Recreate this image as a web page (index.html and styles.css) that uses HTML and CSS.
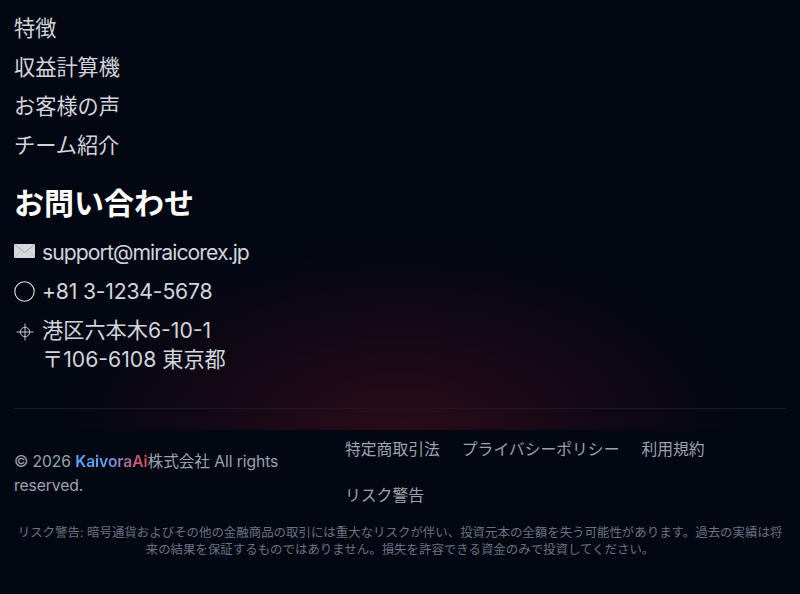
FILE: index.html
```html
<!DOCTYPE html>
<html lang="ja">
<head>
<meta charset="UTF-8">
<meta name="viewport" content="width=device-width, initial-scale=1.0">
<title>Footer</title>
<link rel="stylesheet" href="styles.css">
</head>
<body>
<footer class="footer">
<div class="footer-top">
<ul class="footer-links">
<li>特徴</li>
<li>収益計算機</li>
<li>お客様の声</li>
<li>チーム紹介</li>
</ul>
<h3>お問い合わせ</h3>
<ul class="contact">
<li>
<svg class="icon icon-mail" width="21" height="14" viewBox="0 0 21 14"><rect width="21" height="14" rx="1" fill="#d6d8dc"/><path d="M0.5 0.5 L10.5 8.5 L20.5 0.5" fill="none" stroke="#a4a7af" stroke-width="1"/><path d="M0.5 13.5 L7.5 6 M20.5 13.5 L13.5 6" fill="none" stroke="#b9bbc1" stroke-width="0.7"/></svg>
<span class="email">support@miraicorex.jp</span>
</li>
<li>
<svg class="icon" width="21" height="21" viewBox="0 0 21 21"><circle cx="10.5" cy="10.5" r="9.7" fill="none" stroke="#e0e2e6" stroke-width="1.1"/></svg>
<span class="phone">+81 3-1234-5678</span>
</li>
<li>
<svg class="icon icon-pin" width="21" height="20" viewBox="0 0 21 20"><circle cx="10" cy="10" r="4.7" fill="none" stroke="#c6c8ce" stroke-width="1"/><path d="M10 1.5 V18.5 M1.5 10 H18.5" stroke="#c6c8ce" stroke-width="1"/></svg>
<span>港区六本木6-10-1<br>〒106-6108 東京都</span>
</li>
</ul>
<div class="divider"></div>
</div>
<div class="footer-bottom">
<p class="copyright">© 2026 <span class="brand">KaivoraAi</span>株式会社 All rights reserved.</p>
<div class="legal">
<span>特定商取引法</span>
<span>プライバシーポリシー</span>
<span>利用規約</span>
<span>リスク警告</span>
</div>
</div>
<p class="risk">リスク警告: 暗号通貨およびその他の金融商品の取引には重大なリスクが伴い、投資元本の全額を失う可能性があります。過去の実績は将来の結果を保証するものではありません。損失を許容できる資金のみで投資してください。</p>
</footer>
</body>
</html>
```

FILE: styles.css
```css
* {
margin: 0;
padding: 0;
box-sizing: border-box;
}
html, body {
height: 100%;
overflow: hidden;
}
body {
background-color: #030712;
color: #d1d5db;
font-family: Inter, "Noto Sans CJK JP", sans-serif;
}
ul {
list-style: none;
}
/* Top part with the red glow */
.footer-top {
height: 430px;
padding: 9px 14px 0;
background: radial-gradient(ellipse 340px 185px at 50% 100%, rgba(130, 20, 38, 0.32) 0%, rgba(95, 15, 35, 0.18) 55%, rgba(3, 7, 18, 0) 100%);
}
.footer-links li {
font-size: 21.2px;
line-height: 39px;
height: 39px;
}
.footer-top h3 {
font-size: 30px;
line-height: 36px;
font-weight: 700;
color: #fff;
margin-top: 20px;
margin-bottom: 17px;
}
.contact li {
display: flex;
align-items: flex-start;
gap: 7px;
font-size: 21.2px;
line-height: 29px;
margin-bottom: 10px;
}
.email {
letter-spacing: -0.95px;
}
.phone {
letter-spacing: -0.2px;
}
.icon {
flex: none;
margin-top: 4px;
}
.icon-mail {
margin-top: 6px;
}
.icon-pin {
margin-top: 6px;
margin-left: 1px;
margin-right: -1px;
}
.divider {
border-top: 1px solid #1a1b28;
margin-top: 34px;
}
/* Bottom bar */
.footer-bottom {
display: flex;
padding: 0 14px;
}
.copyright {
width: 330px;
padding-top: 20px;
padding-right: 50px;
font-size: 15.7px;
letter-spacing: -0.1px;
line-height: 24px;
color: #9ca3af;
}
.brand {
font-weight: 600;
background: linear-gradient(90deg, #60a5fa 0%, #60a5fa 40%, #ef4444 100%);
-webkit-background-clip: text;
background-clip: text;
color: transparent;
}
.legal {
flex: 1;
display: flex;
flex-wrap: wrap;
column-gap: 22px;
row-gap: 23px;
padding-top: 8px;
padding-left: 1px;
font-size: 15.8px;
line-height: 23px;
color: #9ca3af;
}
.risk {
padding: 17px 14px 0;
text-align: center;
font-size: 12.45px;
line-height: 17px;
color: #6b7280;
}
```
